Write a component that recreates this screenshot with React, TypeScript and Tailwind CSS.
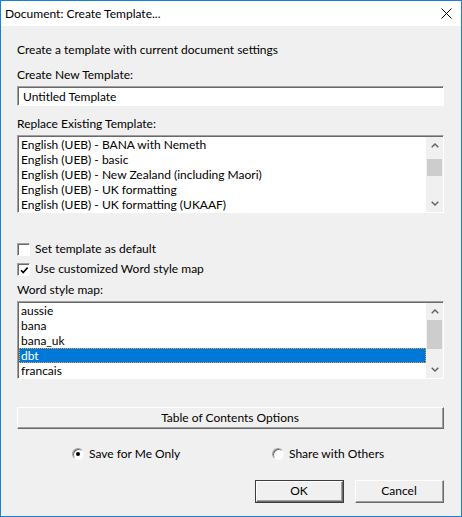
import React from "react";

const templates = [
    "English (UEB) - BANA with Nemeth",
    "English (UEB) - basic",
    "English (UEB) - New Zealand (including Maori)",
    "English (UEB) - UK formatting",
    "English (UEB) - UK formatting (UKAAF)",
];

const styleMaps = ["aussie", "bana", "bana_uk", "dbt", "francais"];

const Chevron = ({ down }: { down?: boolean }) => (
    <svg width="8" height="5" viewBox="0 0 8 5" className={down ? "rotate-180" : ""}>
        <path d="M0.7 4.3 L4 1 L7.3 4.3" fill="none" stroke="#606060" strokeWidth="1.4" />
    </svg>
);

const Scrollbar = ({ thumbTop, thumbHeight }: { thumbTop: number; thumbHeight: number }) => (
    <div className="w-[17px] h-full bg-[#f0f0f0] flex flex-col">
        <div className="h-[17px] flex items-center justify-center">
            <Chevron />
        </div>
        <div className="flex-1 px-[1px]">
            <div className="bg-[#cdcdcd]" style={{ marginTop: thumbTop, height: thumbHeight }} />
        </div>
        <div className="h-[17px] flex items-center justify-center">
            <Chevron down />
        </div>
    </div>
);

const Sunken = ({ className = "", children }: { className?: string; children?: React.ReactNode }) => (
    <div className={`border-t border-l border-t-[#a0a0a0] border-l-[#a0a0a0] border-b border-r border-b-white border-r-white ${className}`}>
        <div className="h-full border-t border-l border-t-[#696969] border-l-[#696969] bg-white">{children}</div>
    </div>
);

const ListBox = ({ items, selected, thumbTop, thumbHeight }: { items: string[]; selected?: number; thumbTop: number; thumbHeight: number }) => (
    <Sunken className="mt-[4px] h-[78px]">
        <div className="flex h-full">
            <div className="flex-1 min-w-0">
                {items.map((it, i) => (
                    <div
                        key={it}
                        className={`h-[15px] leading-[15px] pl-[2px] whitespace-nowrap ${i === selected ? "bg-[#0078d7] text-white outline-1 outline-dotted outline-[#e8a050] -outline-offset-1" : ""}`}
                    >
                        {it}
                    </div>
                ))}
            </div>
            <Scrollbar thumbTop={thumbTop} thumbHeight={thumbHeight} />
        </div>
    </Sunken>
);

const Checkbox = ({ checked, label }: { checked?: boolean; label: string }) => (
    <div className="h-[20px] flex items-center">
        <Sunken className="w-[13px] h-[13px]">
            {checked && (
                <svg width="11" height="11" viewBox="0 0 11 11">
                    <path d="M2 5.2 L4.2 7.6 L8.6 2.6" fill="none" stroke="#000" strokeWidth="1.6" />
                </svg>
            )}
        </Sunken>
        <span className="ml-[5px]">{label}</span>
    </div>
);

const Radio = ({ checked, label }: { checked?: boolean; label: string }) => (
    <div className="flex items-center">
        <div className="w-[12px] h-[12px] rounded-full border border-t-[#a0a0a0] border-l-[#a0a0a0] border-b-[#f8f8f8] border-r-[#f8f8f8] bg-white flex items-center justify-center shadow-[inset_1px_1px_0_#696969]">
            {checked && <div className="w-[4px] h-[4px] rounded-full bg-black" />}
        </div>
        <span className="ml-[5px]">{label}</span>
    </div>
);

const Button = ({ label, isDefault, className = "" }: { label: string; isDefault?: boolean; className?: string }) => (
    <div className={`${isDefault ? "border border-[#3c3c3c]" : ""} ${className}`}>
        <div className="h-full border-t border-l border-t-white border-l-white border-b border-r border-b-[#696969] border-r-[#696969]">
            <div className="h-full border-b border-r border-b-[#a0a0a0] border-r-[#a0a0a0] bg-[#f0f0f0] flex items-center justify-center">
                {label}
            </div>
        </div>
    </div>
);

export default function App() {
    return (
        <div className="w-[462px] h-[517px] border border-[#1a7fd6] bg-[#f0f0f0] flex flex-col text-[12px] text-black font-['Lato','Noto_Sans',sans-serif]">
            <div className="h-[25px] bg-white flex items-center justify-between pl-[4px] pr-[9px]">
                <span>Document: Create Template...</span>
                <svg width="11" height="11" viewBox="0 0 11 11">
                    <path d="M0.5 0.5 L10.5 10.5 M10.5 0.5 L0.5 10.5" stroke="#000" strokeWidth="1" />
                </svg>
            </div>

            <div className="pl-[16px] pr-[17px] flex flex-col">
                <div className="mt-[16px] h-[15px] leading-[15px]">Create a template with current document settings</div>
                <div className="mt-[10px] h-[15px] leading-[15px]">Create New Template:</div>
                <Sunken className="mt-[4px] h-[20px]">
                    <div className="h-full flex items-center pl-[4px]">Untitled Template</div>
                </Sunken>

                <div className="mt-[10px] h-[15px] leading-[15px]">Replace Existing Template:</div>
                <ListBox items={templates} thumbTop={5} thumbHeight={17} />

                <div className="mt-[26px]">
                    <Checkbox label="Set template as default" />
                    <Checkbox checked label="Use customized Word style map" />
                </div>

                <div className="mt-[3px] h-[15px] leading-[15px]">Word style map:</div>
                <ListBox items={styleMaps} selected={3} thumbTop={0} thumbHeight={29} />

                <Button label="Table of Contents Options" className="mt-[28px] h-[22px]" />

                <div className="mt-[15px] h-[20px] flex items-center pl-[55px]">
                    <div className="w-[200px]">
                        <Radio checked label="Save for Me Only" />
                    </div>
                    <Radio label="Share with Others" />
                </div>

                <div className="mt-[16px] flex justify-end gap-[11px]">
                    <Button label="OK" isDefault className="w-[89px] h-[23px]" />
                    <Button label="Cancel" className="w-[89px] h-[23px]" />
                </div>
            </div>
        </div>
    );
}
